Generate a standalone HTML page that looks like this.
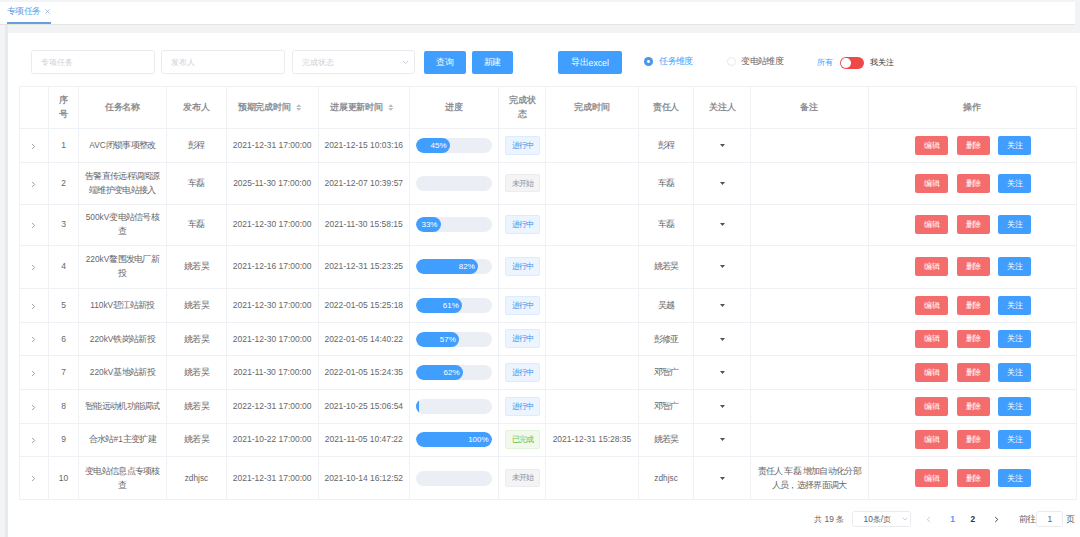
<!DOCTYPE html>
<html><head><meta charset="utf-8"><style>
*{box-sizing:border-box;margin:0;padding:0}
html,body{width:1080px;height:537px;overflow:hidden;background:#f2f3f4;font-family:"Liberation Sans",sans-serif;color:#606266}
#root{position:absolute;left:0;top:0;width:1080.000px;height:537.000px;transform-origin:0 0;transform:scale(1.0)}
.a{position:absolute}
.t{position:absolute;white-space:nowrap;line-height:1}
.c{position:absolute;display:flex;align-items:center;justify-content:center;text-align:center;font-size:9px;letter-spacing:-0.7px;line-height:14px;color:#65676b;padding-bottom:0.8px}
.d{font-size:8.48px;letter-spacing:0}
.l{font-size:8.3px;letter-spacing:0}
.hl{position:absolute;background:#f0f1f4}
.btn{position:absolute;border-radius:2px;color:#fff;display:flex;align-items:center;justify-content:center}
.tag{position:absolute;border-radius:2px;display:flex;align-items:center;justify-content:center;font-size:8px;letter-spacing:-0.95px;border:0.8px solid}
.ing{background:#ecf5ff;border-color:#dcecfc;color:#3f8fe8}
.not{background:#f4f4f5;border-color:#ececee;color:#8e9096}
.done{background:#f0f9eb;border-color:#e3f2da;color:#6cc040}
.pb{position:absolute;background:#ebeef5;border-radius:8px;overflow:hidden}
.pf{position:absolute;left:0;top:0;bottom:0;background:#409eff;border-radius:8px;color:#fff;font-size:8px;display:flex;align-items:center;justify-content:flex-end;padding-right:3.5px}
.inp{position:absolute;border:0.9px solid #e9ebef;border-radius:2.5px;background:#fff}
.ph{position:absolute;color:#c8cbd2;font-size:8px;line-height:1;white-space:nowrap}
.hd{font-weight:bold;color:#8c8e92;font-size:9px;letter-spacing:-0.25px}
</style></head><body><div id="root">

<div class="a" style="left:0px;top:0px;width:1075px;height:24px;background:#fff"></div>
<div class="a" style="left:0px;top:0px;width:1080px;height:2px;background:#f3f4f6"></div>
<div class="a" style="left:0px;top:24px;width:5px;height:513px;background:#f3f4f6"></div>
<div class="a" style="left:5px;top:24px;width:2.5px;height:513px;background:#e9eaec"></div>
<div class="a" style="left:0px;top:23.6px;width:1075px;height:1.4px;background:#e3e3e4"></div>
<div class="t" style="left:7px;top:7.2px;font-size:9px;letter-spacing:-0.75px;color:#5a9de6;">专项任务</div>
<svg class="a" style="left:45px;top:9px" width="5px" height="5px" viewBox="0 0 5 5"><path d="M0.5 0.5 L4.5 4.5 M4.5 0.5 L0.5 4.5" stroke="#8aa8cf" stroke-width="0.7"/></svg>
<div class="a" style="left:7px;top:22px;width:44px;height:2px;background:#6a9de0"></div>
<div class="a" style="left:7.5px;top:33px;width:1072.5px;height:504px;background:#fff"></div>
<div class="inp" style="left:31.3px;top:50.3px;width:123.3px;height:24px;"></div>
<div class="t" style="left:41.3px;top:59.2px;font-size:8px;color:#cdd0d6;">专项任务</div>
<div class="inp" style="left:161.3px;top:50.3px;width:123.9px;height:24px;"></div>
<div class="t" style="left:171.3px;top:59.2px;font-size:8px;color:#cdd0d6;">发布人</div>
<div class="inp" style="left:291.7px;top:50.3px;width:123.3px;height:24px;"></div>
<div class="t" style="left:301.7px;top:59.2px;font-size:8px;color:#cdd0d6;">完成状态</div>
<svg class="a" style="left:402px;top:59.5px" width="7px" height="5px" viewBox="0 0 7 5"><path d="M1 1 L3.5 3.5 L6 1" fill="none" stroke="#c0c4cc" stroke-width="0.8"/></svg>
<div class="btn" style="left:424px;top:51px;width:41.7px;height:23px;background:#409eff;font-size:9px;letter-spacing:-0.5px">查询</div>
<div class="btn" style="left:471.7px;top:51px;width:41px;height:23px;background:#409eff;font-size:9px;letter-spacing:-0.5px">新建</div>
<div class="btn" style="left:558.3px;top:51px;width:63.4px;height:23px;background:#409eff;font-size:9px;letter-spacing:-0.5px">导出<span class=l style='font-size:8.7px;margin-left:0.5px'>excel</span></div>
<div class="a" style="left:644.3px;top:57.3px;width:8.5px;height:8.5px;border-radius:50%;background:#4a98ea"></div>
<div class="a" style="left:647.1px;top:60.1px;width:2.9px;height:2.9px;border-radius:50%;background:#fff"></div>
<div class="t" style="left:659.3px;top:56.8px;font-size:9px;letter-spacing:-0.7px;color:#409eff;">任务维度</div>
<div class="a" style="left:727.3px;top:57.3px;width:8.7px;height:8.7px;border-radius:50%;border:0.8px solid #e6e8ed;background:#fff"></div>
<div class="t" style="left:741.2px;top:56.8px;font-size:9px;letter-spacing:-0.6px;color:#606266;">变电站维度</div>
<div class="t" style="left:816.8px;top:58.7px;font-size:8px;color:#409eff;">所有</div>
<div class="a" style="left:839.8px;top:56.7px;width:24.1px;height:12.1px;border-radius:6px;background:#f04848"></div>
<div class="a" style="left:841px;top:57.9px;width:9.8px;height:9.7px;border-radius:50%;background:#fff"></div>
<div class="t" style="left:869.9px;top:58.8px;font-size:8px;color:#303133;">我关注</div>
<div class="a" style="left:19.6px;top:85.7px;width:1056.8px;height:1px;background:#f0f1f4"></div>
<div class="a" style="left:19.6px;top:128px;width:1056.8px;height:1px;background:#f0f1f4"></div>
<div class="a" style="left:19.6px;top:162px;width:1056.8px;height:1px;background:#f0f1f4"></div>
<div class="a" style="left:19.6px;top:203.7px;width:1056.8px;height:1px;background:#f0f1f4"></div>
<div class="a" style="left:19.6px;top:244.7px;width:1056.8px;height:1px;background:#f0f1f4"></div>
<div class="a" style="left:19.6px;top:288px;width:1056.8px;height:1px;background:#f0f1f4"></div>
<div class="a" style="left:19.6px;top:322.1px;width:1056.8px;height:1px;background:#f0f1f4"></div>
<div class="a" style="left:19.6px;top:355px;width:1056.8px;height:1px;background:#f0f1f4"></div>
<div class="a" style="left:19.6px;top:389.2px;width:1056.8px;height:1px;background:#f0f1f4"></div>
<div class="a" style="left:19.6px;top:422.7px;width:1056.8px;height:1px;background:#f0f1f4"></div>
<div class="a" style="left:19.6px;top:456px;width:1056.8px;height:1px;background:#f0f1f4"></div>
<div class="a" style="left:19.6px;top:499.2px;width:1056.8px;height:1px;background:#f0f1f4"></div>
<div class="a" style="left:19.1px;top:86.2px;width:1px;height:413.5px;background:#f0f1f4"></div>
<div class="a" style="left:48.4px;top:86.2px;width:1px;height:413.5px;background:#f0f1f4"></div>
<div class="a" style="left:77.7px;top:86.2px;width:1px;height:413.5px;background:#f0f1f4"></div>
<div class="a" style="left:166.1px;top:86.2px;width:1px;height:413.5px;background:#f0f1f4"></div>
<div class="a" style="left:225.8px;top:86.2px;width:1px;height:413.5px;background:#f0f1f4"></div>
<div class="a" style="left:317.5px;top:86.2px;width:1px;height:413.5px;background:#f0f1f4"></div>
<div class="a" style="left:409px;top:86.2px;width:1px;height:413.5px;background:#f0f1f4"></div>
<div class="a" style="left:498.1px;top:86.2px;width:1px;height:413.5px;background:#f0f1f4"></div>
<div class="a" style="left:545.2px;top:86.2px;width:1px;height:413.5px;background:#f0f1f4"></div>
<div class="a" style="left:637.8px;top:86.2px;width:1px;height:413.5px;background:#f0f1f4"></div>
<div class="a" style="left:693.4px;top:86.2px;width:1px;height:413.5px;background:#f0f1f4"></div>
<div class="a" style="left:749.9px;top:86.2px;width:1px;height:413.5px;background:#f0f1f4"></div>
<div class="a" style="left:867.6px;top:86.2px;width:1px;height:413.5px;background:#f0f1f4"></div>
<div class="a" style="left:1075.9px;top:86.2px;width:1px;height:413.5px;background:#f0f1f4"></div>
<div class="c hd" style="left:48.9px;top:86.2px;width:29.3px;height:42.3px;"><div>序<br>号</div></div>
<div class="c hd" style="left:78.2px;top:86.2px;width:88.4px;height:42.3px;"><div>任务名称</div></div>
<div class="c hd" style="left:166.6px;top:86.2px;width:59.7px;height:42.3px;"><div>发布人</div></div>
<div class="c hd" style="left:409.5px;top:86.2px;width:89.1px;height:42.3px;"><div>进度</div></div>
<div class="c hd" style="left:498.6px;top:86.2px;width:47.1px;height:42.3px;"><div>完成状<br>态</div></div>
<div class="c hd" style="left:545.7px;top:86.2px;width:92.6px;height:42.3px;"><div>完成时间</div></div>
<div class="c hd" style="left:638.3px;top:86.2px;width:55.6px;height:42.3px;"><div>责任人</div></div>
<div class="c hd" style="left:693.9px;top:86.2px;width:56.5px;height:42.3px;"><div>关注人</div></div>
<div class="c hd" style="left:750.4px;top:86.2px;width:117.7px;height:42.3px;"><div>备注</div></div>
<div class="c hd" style="left:868.1px;top:86.2px;width:208.3px;height:42.3px;"><div>操作</div></div>
<div class="t" style="left:237.9px;top:103.2px;font-size:9px;letter-spacing:-0.25px;color:#8c8e92;font-weight:bold">预期完成时间</div>
<svg class="a" style="left:296.2px;top:103.5px" width="5.5px" height="7px" viewBox="0 0 5.5 7"><path d="M0.2 3 L2.75 0.3 L5.3 3 Z M0.2 4 L2.75 6.7 L5.3 4 Z" fill="#b8bbc2"/></svg>
<div class="t" style="left:330.2px;top:103.2px;font-size:9px;letter-spacing:-0.25px;color:#8c8e92;font-weight:bold">进展更新时间</div>
<svg class="a" style="left:388px;top:103.5px" width="5.5px" height="7px" viewBox="0 0 5.5 7"><path d="M0.2 3 L2.75 0.3 L5.3 3 Z M0.2 4 L2.75 6.7 L5.3 4 Z" fill="#b8bbc2"/></svg>
<svg class="a" style="left:30.7px;top:142.7px" width="5px" height="7px" viewBox="0 0 5 7"><path d="M1.2 1 L3.6 3.5 L1.2 6" fill="none" stroke="#9a9da4" stroke-width="1"/></svg>
<div class="c d" style="left:48.9px;top:128.5px;width:29.3px;height:34px;"><div>1</div></div>
<div class="c" style="left:78.2px;top:128.5px;width:88.4px;height:34px;"><div><span class=l>AVC</span>闭锁事项整改</div></div>
<div class="c" style="left:166.6px;top:128.5px;width:59.7px;height:34px;"><div>彭程</div></div>
<div class="c d" style="left:226.3px;top:128.5px;width:91.7px;height:34px;"><div>2021-12-31 17:00:00</div></div>
<div class="c d" style="left:318px;top:128.5px;width:91.5px;height:34px;"><div>2021-12-15 10:03:16</div></div>
<div class="pb" style="left:415.8px;top:138px;width:76.3px;height:15px;"><div class="pf" style="width:34.335px">45%</div></div>
<div class="tag ing" style="left:505.3px;top:135.9px;width:34.7px;height:18.7px;">进行中</div>
<div class="c" style="left:638.3px;top:128.5px;width:55.6px;height:34px;"><div>彭程</div></div>
<svg class="a" style="left:719.7px;top:144px" width="5px" height="3px" viewBox="0 0 5 3"><path d="M0 0 L5 0 L2.5 3 Z" fill="#505256"/></svg>
<div class="btn" style="left:915.1px;top:136.1px;width:33px;height:18.7px;background:#f56c6c;font-size:8px;letter-spacing:-0.8px">编辑</div>
<div class="btn" style="left:956.6px;top:136.1px;width:33px;height:18.7px;background:#f56c6c;font-size:8px;letter-spacing:-0.8px">删除</div>
<div class="btn" style="left:998.2px;top:136.1px;width:33px;height:18.7px;background:#409eff;font-size:8px;letter-spacing:-0.8px">关注</div>
<svg class="a" style="left:30.7px;top:180.55px" width="5px" height="7px" viewBox="0 0 5 7"><path d="M1.2 1 L3.6 3.5 L1.2 6" fill="none" stroke="#9a9da4" stroke-width="1"/></svg>
<div class="c d" style="left:48.9px;top:162.5px;width:29.3px;height:41.7px;"><div>2</div></div>
<div class="c" style="left:78.2px;top:162.5px;width:88.4px;height:41.7px;"><div>告警直传远程调阅源<br>端维护变电站接入</div></div>
<div class="c" style="left:166.6px;top:162.5px;width:59.7px;height:41.7px;"><div>车磊</div></div>
<div class="c d" style="left:226.3px;top:162.5px;width:91.7px;height:41.7px;"><div>2025-11-30 17:00:00</div></div>
<div class="c d" style="left:318px;top:162.5px;width:91.5px;height:41.7px;"><div>2021-12-07 10:39:57</div></div>
<div class="pb" style="left:415.8px;top:175.85px;width:76.3px;height:15px;"></div>
<div class="tag not" style="left:505.3px;top:173.75px;width:34.7px;height:18.7px;">未开始</div>
<div class="c" style="left:638.3px;top:162.5px;width:55.6px;height:41.7px;"><div>车磊</div></div>
<svg class="a" style="left:719.7px;top:181.85px" width="5px" height="3px" viewBox="0 0 5 3"><path d="M0 0 L5 0 L2.5 3 Z" fill="#505256"/></svg>
<div class="btn" style="left:915.1px;top:173.95px;width:33px;height:18.7px;background:#f56c6c;font-size:8px;letter-spacing:-0.8px">编辑</div>
<div class="btn" style="left:956.6px;top:173.95px;width:33px;height:18.7px;background:#f56c6c;font-size:8px;letter-spacing:-0.8px">删除</div>
<div class="btn" style="left:998.2px;top:173.95px;width:33px;height:18.7px;background:#409eff;font-size:8px;letter-spacing:-0.8px">关注</div>
<svg class="a" style="left:30.7px;top:221.9px" width="5px" height="7px" viewBox="0 0 5 7"><path d="M1.2 1 L3.6 3.5 L1.2 6" fill="none" stroke="#9a9da4" stroke-width="1"/></svg>
<div class="c d" style="left:48.9px;top:204.2px;width:29.3px;height:41px;"><div>3</div></div>
<div class="c" style="left:78.2px;top:204.2px;width:88.4px;height:41px;"><div><span class=l>500kV</span>变电站信号核<br>查</div></div>
<div class="c" style="left:166.6px;top:204.2px;width:59.7px;height:41px;"><div>车磊</div></div>
<div class="c d" style="left:226.3px;top:204.2px;width:91.7px;height:41px;"><div>2021-12-30 17:00:00</div></div>
<div class="c d" style="left:318px;top:204.2px;width:91.5px;height:41px;"><div>2021-11-30 15:58:15</div></div>
<div class="pb" style="left:415.8px;top:217.2px;width:76.3px;height:15px;"><div class="pf" style="width:25.179px">33%</div></div>
<div class="tag ing" style="left:505.3px;top:215.1px;width:34.7px;height:18.7px;">进行中</div>
<div class="c" style="left:638.3px;top:204.2px;width:55.6px;height:41px;"><div>车磊</div></div>
<svg class="a" style="left:719.7px;top:223.2px" width="5px" height="3px" viewBox="0 0 5 3"><path d="M0 0 L5 0 L2.5 3 Z" fill="#505256"/></svg>
<div class="btn" style="left:915.1px;top:215.3px;width:33px;height:18.7px;background:#f56c6c;font-size:8px;letter-spacing:-0.8px">编辑</div>
<div class="btn" style="left:956.6px;top:215.3px;width:33px;height:18.7px;background:#f56c6c;font-size:8px;letter-spacing:-0.8px">删除</div>
<div class="btn" style="left:998.2px;top:215.3px;width:33px;height:18.7px;background:#409eff;font-size:8px;letter-spacing:-0.8px">关注</div>
<svg class="a" style="left:30.7px;top:264.05px" width="5px" height="7px" viewBox="0 0 5 7"><path d="M1.2 1 L3.6 3.5 L1.2 6" fill="none" stroke="#9a9da4" stroke-width="1"/></svg>
<div class="c d" style="left:48.9px;top:245.2px;width:29.3px;height:43.3px;"><div>4</div></div>
<div class="c" style="left:78.2px;top:245.2px;width:88.4px;height:43.3px;"><div><span class=l>220kV</span>鳌围发电厂新<br>投</div></div>
<div class="c" style="left:166.6px;top:245.2px;width:59.7px;height:43.3px;"><div>姚若昊</div></div>
<div class="c d" style="left:226.3px;top:245.2px;width:91.7px;height:43.3px;"><div>2021-12-16 17:00:00</div></div>
<div class="c d" style="left:318px;top:245.2px;width:91.5px;height:43.3px;"><div>2021-12-31 15:23:25</div></div>
<div class="pb" style="left:415.8px;top:259.35px;width:76.3px;height:15px;"><div class="pf" style="width:62.566px">82%</div></div>
<div class="tag ing" style="left:505.3px;top:257.25px;width:34.7px;height:18.7px;">进行中</div>
<div class="c" style="left:638.3px;top:245.2px;width:55.6px;height:43.3px;"><div>姚若昊</div></div>
<svg class="a" style="left:719.7px;top:265.35px" width="5px" height="3px" viewBox="0 0 5 3"><path d="M0 0 L5 0 L2.5 3 Z" fill="#505256"/></svg>
<div class="btn" style="left:915.1px;top:257.45px;width:33px;height:18.7px;background:#f56c6c;font-size:8px;letter-spacing:-0.8px">编辑</div>
<div class="btn" style="left:956.6px;top:257.45px;width:33px;height:18.7px;background:#f56c6c;font-size:8px;letter-spacing:-0.8px">删除</div>
<div class="btn" style="left:998.2px;top:257.45px;width:33px;height:18.7px;background:#409eff;font-size:8px;letter-spacing:-0.8px">关注</div>
<svg class="a" style="left:30.7px;top:302.75px" width="5px" height="7px" viewBox="0 0 5 7"><path d="M1.2 1 L3.6 3.5 L1.2 6" fill="none" stroke="#9a9da4" stroke-width="1"/></svg>
<div class="c d" style="left:48.9px;top:288.5px;width:29.3px;height:34.1px;"><div>5</div></div>
<div class="c" style="left:78.2px;top:288.5px;width:88.4px;height:34.1px;"><div><span class=l>110kV</span>碧江站新投</div></div>
<div class="c" style="left:166.6px;top:288.5px;width:59.7px;height:34.1px;"><div>姚若昊</div></div>
<div class="c d" style="left:226.3px;top:288.5px;width:91.7px;height:34.1px;"><div>2021-12-30 17:00:00</div></div>
<div class="c d" style="left:318px;top:288.5px;width:91.5px;height:34.1px;"><div>2022-01-05 15:25:18</div></div>
<div class="pb" style="left:415.8px;top:298.05px;width:76.3px;height:15px;"><div class="pf" style="width:46.543px">61%</div></div>
<div class="tag ing" style="left:505.3px;top:295.95px;width:34.7px;height:18.7px;">进行中</div>
<div class="c" style="left:638.3px;top:288.5px;width:55.6px;height:34.1px;"><div>吴越</div></div>
<svg class="a" style="left:719.7px;top:304.05px" width="5px" height="3px" viewBox="0 0 5 3"><path d="M0 0 L5 0 L2.5 3 Z" fill="#505256"/></svg>
<div class="btn" style="left:915.1px;top:296.15px;width:33px;height:18.7px;background:#f56c6c;font-size:8px;letter-spacing:-0.8px">编辑</div>
<div class="btn" style="left:956.6px;top:296.15px;width:33px;height:18.7px;background:#f56c6c;font-size:8px;letter-spacing:-0.8px">删除</div>
<div class="btn" style="left:998.2px;top:296.15px;width:33px;height:18.7px;background:#409eff;font-size:8px;letter-spacing:-0.8px">关注</div>
<svg class="a" style="left:30.7px;top:336.25px" width="5px" height="7px" viewBox="0 0 5 7"><path d="M1.2 1 L3.6 3.5 L1.2 6" fill="none" stroke="#9a9da4" stroke-width="1"/></svg>
<div class="c d" style="left:48.9px;top:322.6px;width:29.3px;height:32.9px;"><div>6</div></div>
<div class="c" style="left:78.2px;top:322.6px;width:88.4px;height:32.9px;"><div><span class=l>220kV</span>铁岗站新投</div></div>
<div class="c" style="left:166.6px;top:322.6px;width:59.7px;height:32.9px;"><div>姚若昊</div></div>
<div class="c d" style="left:226.3px;top:322.6px;width:91.7px;height:32.9px;"><div>2021-12-30 17:00:00</div></div>
<div class="c d" style="left:318px;top:322.6px;width:91.5px;height:32.9px;"><div>2022-01-05 14:40:22</div></div>
<div class="pb" style="left:415.8px;top:331.55px;width:76.3px;height:15px;"><div class="pf" style="width:43.491px">57%</div></div>
<div class="tag ing" style="left:505.3px;top:329.45px;width:34.7px;height:18.7px;">进行中</div>
<div class="c" style="left:638.3px;top:322.6px;width:55.6px;height:32.9px;"><div>彭修亚</div></div>
<svg class="a" style="left:719.7px;top:337.55px" width="5px" height="3px" viewBox="0 0 5 3"><path d="M0 0 L5 0 L2.5 3 Z" fill="#505256"/></svg>
<div class="btn" style="left:915.1px;top:329.65px;width:33px;height:18.7px;background:#f56c6c;font-size:8px;letter-spacing:-0.8px">编辑</div>
<div class="btn" style="left:956.6px;top:329.65px;width:33px;height:18.7px;background:#f56c6c;font-size:8px;letter-spacing:-0.8px">删除</div>
<div class="btn" style="left:998.2px;top:329.65px;width:33px;height:18.7px;background:#409eff;font-size:8px;letter-spacing:-0.8px">关注</div>
<svg class="a" style="left:30.7px;top:369.8px" width="5px" height="7px" viewBox="0 0 5 7"><path d="M1.2 1 L3.6 3.5 L1.2 6" fill="none" stroke="#9a9da4" stroke-width="1"/></svg>
<div class="c d" style="left:48.9px;top:355.5px;width:29.3px;height:34.2px;"><div>7</div></div>
<div class="c" style="left:78.2px;top:355.5px;width:88.4px;height:34.2px;"><div><span class=l>220kV</span>基地站新投</div></div>
<div class="c" style="left:166.6px;top:355.5px;width:59.7px;height:34.2px;"><div>姚若昊</div></div>
<div class="c d" style="left:226.3px;top:355.5px;width:91.7px;height:34.2px;"><div>2021-11-30 17:00:00</div></div>
<div class="c d" style="left:318px;top:355.5px;width:91.5px;height:34.2px;"><div>2022-01-05 15:24:35</div></div>
<div class="pb" style="left:415.8px;top:365.1px;width:76.3px;height:15px;"><div class="pf" style="width:47.306px">62%</div></div>
<div class="tag ing" style="left:505.3px;top:363px;width:34.7px;height:18.7px;">进行中</div>
<div class="c" style="left:638.3px;top:355.5px;width:55.6px;height:34.2px;"><div>邓智广</div></div>
<svg class="a" style="left:719.7px;top:371.1px" width="5px" height="3px" viewBox="0 0 5 3"><path d="M0 0 L5 0 L2.5 3 Z" fill="#505256"/></svg>
<div class="btn" style="left:915.1px;top:363.2px;width:33px;height:18.7px;background:#f56c6c;font-size:8px;letter-spacing:-0.8px">编辑</div>
<div class="btn" style="left:956.6px;top:363.2px;width:33px;height:18.7px;background:#f56c6c;font-size:8px;letter-spacing:-0.8px">删除</div>
<div class="btn" style="left:998.2px;top:363.2px;width:33px;height:18.7px;background:#409eff;font-size:8px;letter-spacing:-0.8px">关注</div>
<svg class="a" style="left:30.7px;top:403.65px" width="5px" height="7px" viewBox="0 0 5 7"><path d="M1.2 1 L3.6 3.5 L1.2 6" fill="none" stroke="#9a9da4" stroke-width="1"/></svg>
<div class="c d" style="left:48.9px;top:389.7px;width:29.3px;height:33.5px;"><div>8</div></div>
<div class="c" style="left:78.2px;top:389.7px;width:88.4px;height:33.5px;"><div>智能远动机功能调试</div></div>
<div class="c" style="left:166.6px;top:389.7px;width:59.7px;height:33.5px;"><div>姚若昊</div></div>
<div class="c d" style="left:226.3px;top:389.7px;width:91.7px;height:33.5px;"><div>2022-12-31 17:00:00</div></div>
<div class="c d" style="left:318px;top:389.7px;width:91.5px;height:33.5px;"><div>2021-10-25 15:06:54</div></div>
<div class="pb" style="left:415.8px;top:398.95px;width:76.3px;height:15px;"><div class="pf" style="width:0.763px"></div></div>
<div class="tag ing" style="left:505.3px;top:396.85px;width:34.7px;height:18.7px;">进行中</div>
<div class="c" style="left:638.3px;top:389.7px;width:55.6px;height:33.5px;"><div>邓智广</div></div>
<svg class="a" style="left:719.7px;top:404.95px" width="5px" height="3px" viewBox="0 0 5 3"><path d="M0 0 L5 0 L2.5 3 Z" fill="#505256"/></svg>
<div class="btn" style="left:915.1px;top:397.05px;width:33px;height:18.7px;background:#f56c6c;font-size:8px;letter-spacing:-0.8px">编辑</div>
<div class="btn" style="left:956.6px;top:397.05px;width:33px;height:18.7px;background:#f56c6c;font-size:8px;letter-spacing:-0.8px">删除</div>
<div class="btn" style="left:998.2px;top:397.05px;width:33px;height:18.7px;background:#409eff;font-size:8px;letter-spacing:-0.8px">关注</div>
<svg class="a" style="left:30.7px;top:437.05px" width="5px" height="7px" viewBox="0 0 5 7"><path d="M1.2 1 L3.6 3.5 L1.2 6" fill="none" stroke="#9a9da4" stroke-width="1"/></svg>
<div class="c d" style="left:48.9px;top:423.2px;width:29.3px;height:33.3px;"><div>9</div></div>
<div class="c" style="left:78.2px;top:423.2px;width:88.4px;height:33.3px;"><div>合水站<span class=l>#1</span>主变扩建</div></div>
<div class="c" style="left:166.6px;top:423.2px;width:59.7px;height:33.3px;"><div>姚若昊</div></div>
<div class="c d" style="left:226.3px;top:423.2px;width:91.7px;height:33.3px;"><div>2021-10-22 17:00:00</div></div>
<div class="c d" style="left:318px;top:423.2px;width:91.5px;height:33.3px;"><div>2021-11-05 10:47:22</div></div>
<div class="pb" style="left:415.8px;top:432.35px;width:76.3px;height:15px;"><div class="pf" style="width:76.3px">100%</div></div>
<div class="tag done" style="left:505.3px;top:430.25px;width:34.7px;height:18.7px;">已完成</div>
<div class="c d" style="left:545.7px;top:423.2px;width:92.6px;height:33.3px;"><div>2021-12-31 15:28:35</div></div>
<div class="c" style="left:638.3px;top:423.2px;width:55.6px;height:33.3px;"><div>姚若昊</div></div>
<svg class="a" style="left:719.7px;top:438.35px" width="5px" height="3px" viewBox="0 0 5 3"><path d="M0 0 L5 0 L2.5 3 Z" fill="#505256"/></svg>
<div class="btn" style="left:915.1px;top:430.45px;width:33px;height:18.7px;background:#f56c6c;font-size:8px;letter-spacing:-0.8px">编辑</div>
<div class="btn" style="left:956.6px;top:430.45px;width:33px;height:18.7px;background:#f56c6c;font-size:8px;letter-spacing:-0.8px">删除</div>
<div class="btn" style="left:998.2px;top:430.45px;width:33px;height:18.7px;background:#409eff;font-size:8px;letter-spacing:-0.8px">关注</div>
<svg class="a" style="left:30.7px;top:475.3px" width="5px" height="7px" viewBox="0 0 5 7"><path d="M1.2 1 L3.6 3.5 L1.2 6" fill="none" stroke="#9a9da4" stroke-width="1"/></svg>
<div class="c d" style="left:48.9px;top:456.5px;width:29.3px;height:43.2px;"><div>10</div></div>
<div class="c" style="left:78.2px;top:456.5px;width:88.4px;height:43.2px;"><div>变电站信息点专项核<br>查</div></div>
<div class="c" style="left:166.6px;top:456.5px;width:59.7px;height:43.2px;"><div><span class=l>zdhjsc</span></div></div>
<div class="c d" style="left:226.3px;top:456.5px;width:91.7px;height:43.2px;"><div>2021-12-31 17:00:00</div></div>
<div class="c d" style="left:318px;top:456.5px;width:91.5px;height:43.2px;"><div>2021-10-14 16:12:52</div></div>
<div class="pb" style="left:415.8px;top:470.6px;width:76.3px;height:15px;"></div>
<div class="tag not" style="left:505.3px;top:468.5px;width:34.7px;height:18.7px;">未开始</div>
<div class="c" style="left:638.3px;top:456.5px;width:55.6px;height:43.2px;"><div><span class=l>zdhjsc</span></div></div>
<svg class="a" style="left:719.7px;top:476.6px" width="5px" height="3px" viewBox="0 0 5 3"><path d="M0 0 L5 0 L2.5 3 Z" fill="#505256"/></svg>
<div class="c" style="left:750.4px;top:456.5px;width:117.7px;height:43.2px;"><div>责任人 车磊 增加自动化分部<br>人员，选择界面调大</div></div>
<div class="btn" style="left:915.1px;top:468.7px;width:33px;height:18.7px;background:#f56c6c;font-size:8px;letter-spacing:-0.8px">编辑</div>
<div class="btn" style="left:956.6px;top:468.7px;width:33px;height:18.7px;background:#f56c6c;font-size:8px;letter-spacing:-0.8px">删除</div>
<div class="btn" style="left:998.2px;top:468.7px;width:33px;height:18.7px;background:#409eff;font-size:8px;letter-spacing:-0.8px">关注</div>
<div class="t" style="left:814.3px;top:514.8px;font-size:8.4px;color:#606266;">共 19 条</div>
<div class="inp" style="left:852.4px;top:511px;width:59.1px;height:16.4px;"></div>
<div class="t" style="left:863.5px;top:514.8px;font-size:8.4px;color:#606266;">10条/页</div>
<svg class="a" style="left:901.5px;top:516.8px" width="6px" height="4px" viewBox="0 0 6 4"><path d="M0.8 0.8 L3 3 L5.2 0.8" fill="none" stroke="#c0c4cc" stroke-width="0.8"/></svg>
<svg class="a" style="left:925.8px;top:515.5px" width="5px" height="7px" viewBox="0 0 5 7"><path d="M3.8 1 L1.2 3.5 L3.8 6" fill="none" stroke="#c0c4cc" stroke-width="0.9"/></svg>
<div class="t" style="left:950.2px;top:514.8px;font-size:8.4px;color:#409eff;font-weight:bold">1</div>
<div class="t" style="left:970.5px;top:514.8px;font-size:8.4px;color:#303133;font-weight:bold">2</div>
<svg class="a" style="left:993.6px;top:515.5px" width="5px" height="7px" viewBox="0 0 5 7"><path d="M1.2 1 L3.8 3.5 L1.2 6" fill="none" stroke="#303133" stroke-width="0.9"/></svg>
<div class="t" style="left:1018.6px;top:514.8px;font-size:9px;letter-spacing:-0.7px;color:#606266;">前往</div>
<div class="inp" style="left:1036.4px;top:510.6px;width:26.6px;height:16.2px;"></div>
<div class="t" style="left:1047.5px;top:514.8px;font-size:8.4px;color:#606266;">1</div>
<div class="t" style="left:1065.7px;top:514.8px;font-size:9px;color:#606266;">页</div>
</div></body></html>
